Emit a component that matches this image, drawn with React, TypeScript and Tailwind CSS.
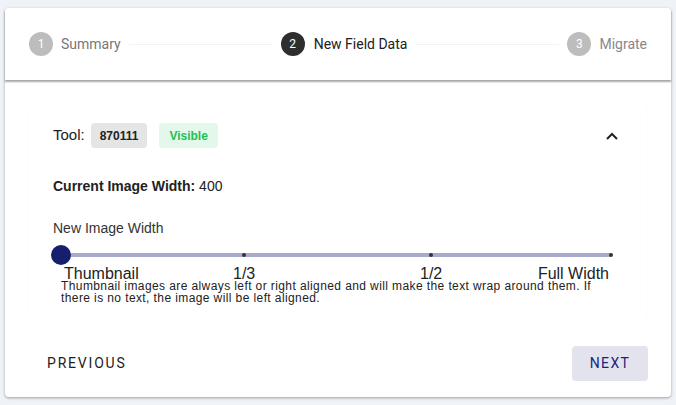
import React from "react";

const roboto = { fontFamily: "Roboto, 'Liberation Sans', sans-serif" } as const;

function StepCircle({ n, active }: { n: number; active?: boolean }) {
  return (
    <div
      className={`w-6 h-6 rounded-full flex items-center justify-center text-[12px] text-white shrink-0 ${
        active ? "bg-[#2e2e2e]" : "bg-[#bdbdbd]"
      }`}
    >
      {n}
    </div>
  );
}

function Connector() {
  return <div className="flex-1 h-px bg-[#f2f2f2] mx-2" />;
}

export default function App() {
  return (
    <div className="min-h-[405px] bg-[#eff3f7] pt-2 px-[5px]">
      <div className="bg-white rounded shadow-[0_1px_3px_rgba(0,0,0,0.35)]">
        {/* Stepper */}
        <div
          className="relative z-10 h-[72px] flex items-center px-6 bg-white rounded-t shadow-[0_2px_2px_rgba(0,0,0,0.35)]"
          style={roboto}
        >
          <div className="flex items-center gap-2">
            <StepCircle n={1} />
            <span className="text-[14px] text-[#777]">Summary</span>
          </div>
          <Connector />
          <div className="flex items-center gap-[9px]">
            <StepCircle n={2} active />
            <span className="text-[14px] text-[#212121]">New Field Data</span>
          </div>
          <Connector />
          <div className="flex items-center gap-2">
            <StepCircle n={3} />
            <span className="text-[14px] text-[#888]">Migrate</span>
          </div>
        </div>

        {/* Content */}
        <div className="px-6 pt-6" style={{ fontFamily: "'Liberation Sans', Arial, sans-serif" }}>
          <div className="rounded shadow-[0_0_1px_rgba(0,0,0,0.08)] pl-6 pr-[29px] pt-[19px] pb-[16px]">
            <div className="flex items-center h-[25px]">
              <span className="text-[15px] text-[#222]">Tool:</span>
              <span className="ml-[6px] h-[25px] px-[9px] rounded bg-[#e5e5e5] flex items-center text-[12px] font-bold text-[#222]">
                870111
              </span>
              <span className="ml-3 h-[25px] px-[10px] rounded bg-[#e3f8ea] flex items-center text-[12px] font-bold text-[#22bf57]">
                Visible
              </span>
              <div className="flex-1" />
              <svg width="12" height="8" viewBox="0 0 12 8">
                <path d="M1 7 L6 2 L11 7" stroke="#222" strokeWidth="2" fill="none" />
              </svg>
            </div>

            <div className="mt-[29px] text-[14px] text-[#222] leading-[18px]">
              <span className="font-bold">Current Image Width:</span> 400
            </div>

            <div className="mt-[24px] text-[14px] text-[#333] leading-[18px]">New Image Width</div>

            {/* Slider */}
            <div className="relative ml-2 w-[550px] h-[22px] mt-[7px]">
              <div className="absolute left-0 right-0 top-[9px] h-[4px] rounded-full bg-[#a8aacb]" />
              {[33.3, 67.3, 100].map((p) => (
                <div
                  key={p}
                  className="absolute top-[9px] w-[4px] h-[4px] rounded-full bg-[#333]"
                  style={{ left: `calc(${p}% - 2px)` }}
                />
              ))}
              <div className="absolute left-[-10px] top-[1px] w-5 h-5 rounded-full bg-[#151f6d]" />
            </div>
            <div className="relative ml-2 w-[550px] h-[14px] text-[16px] text-[#222] leading-[16px]">
              <span className="absolute left-[3px] top-0">Thumbnail</span>
              <span className="absolute top-0 -translate-x-1/2" style={{ left: "33.3%" }}>1/3</span>
              <span className="absolute top-0 -translate-x-1/2" style={{ left: "67.3%" }}>1/2</span>
              <span className="absolute right-[2px] top-0">Full Width</span>
            </div>
            <p className="ml-2 w-[550px] text-[12px] leading-[12px] text-[#222] tracking-[0.4px]">
              Thumbnail images are always left or right aligned and will make the text wrap around them. If there is
              no text, the image will be left aligned.
            </p>
          </div>
        </div>

        {/* Footer */}
        <div className="flex items-center justify-between pl-[42px] pr-[23px] pt-[26px] pb-[16px]" style={roboto}>
          <span className="text-[14px] font-normal tracking-[1.8px] text-[#222]">PREVIOUS</span>
          <button className="w-[76px] h-[35px] rounded bg-[#e3e3ee] text-[14px] font-normal tracking-[1.4px] text-[#1a237e]">
            NEXT
          </button>
        </div>
      </div>
    </div>
  );
}
